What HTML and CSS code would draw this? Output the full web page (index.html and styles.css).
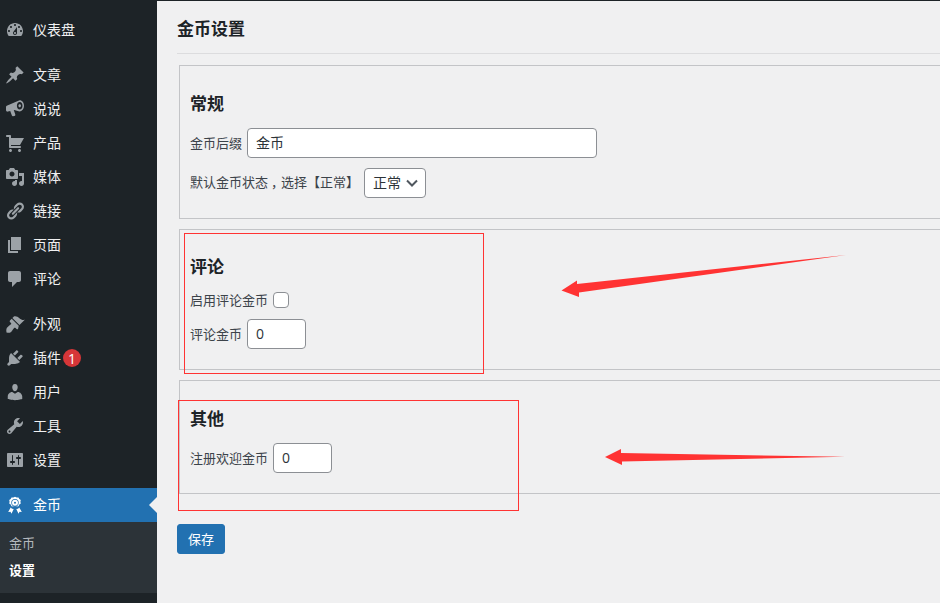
FILE: index.html
```html
<!DOCTYPE html>
<html lang="zh-CN">
<head>
<meta charset="utf-8">
<title>金币设置</title>
<link rel="stylesheet" href="styles.css">
</head>
<body>
<div class="app">
  <nav class="sidebar">
    <ul class="menu">
      <li class="item"><svg class="icon" viewBox="0 0 20 20"><path fill-rule="evenodd" d="M3.76 16h12.48c1.1-1.37 1.76-3.11 1.76-5 0-4.42-3.58-8-8-8s-8 3.58-8 8c0 1.89.66 3.63 1.76 5zM10 4c.55 0 1 .45 1 1s-.45 1-1 1-1-.45-1-1 .45-1 1-1zM6 6c.55 0 1 .45 1 1s-.45 1-1 1-1-.45-1-1 .45-1 1-1zm8 0c.55 0 1 .45 1 1s-.45 1-1 1-1-.45-1-1 .45-1 1-1zm-5.37 5.55L12 7v6c0 1.1-.9 2-2 2s-2-.9-2-2c0-.57.24-1.08.63-1.45zM4 10c.55 0 1 .45 1 1s-.45 1-1 1-1-.45-1-1 .45-1 1-1zm12 0c.55 0 1 .45 1 1s-.45 1-1 1-1-.45-1-1 .45-1 1-1zm-5 3c0-.55-.45-1-1-1s-1 .45-1 1 .45 1 1 1 1-.45 1-1z"/></svg><span>仪表盘</span></li>
    </ul>
    <ul class="menu">
      <li class="item"><svg class="icon" viewBox="0 0 20 20"><path d="M10.44 3.02l1.82-1.82 6.36 6.35-1.83 1.82c-1.05-.68-2.48-.57-3.41.36l-.75.75c-.92.93-1.04 2.35-.35 3.41l-1.83 1.82-2.41-2.41-2.8 2.79c-.42.42-3.38 2.71-3.8 2.29s1.86-3.39 2.28-3.81l2.79-2.79L4.1 9.36l1.83-1.82c1.05.69 2.48.57 3.4-.36l.75-.75c.93-.92 1.05-2.35.36-3.41z"/></svg><span>文章</span></li>
      <li class="item"><svg class="icon" viewBox="0 0 20 20"><path fill-rule="evenodd" d="M14.6 1.2c2.8 0 4.4 2.6 4.4 5.6s-1.9 5.6-4.5 5.6l-5.3-1.5-.4.2 1.5 4.4c.2.7-.2 1.4-.9 1.5l-1.4.2c-.5.1-.9-.2-1.1-.7L5.2 12l-2.3.6C1.900 12.800 1 12 1 11V8.200c0-.8.6-1.400 1.300-1.600zM14.700 3c-1.600 0-2.800 1.700-2.800 3.800s1.200 3.800 2.800 3.800 2.800-1.700 2.800-3.800S16.300 3 14.700 3zm0 2.300c.8 0 1.300.7 1.300 1.500s-.6 1.500-1.300 1.500-1.300-.7-1.300-1.500.5-1.500 1.300-1.500z"/></svg><span>说说</span></li>
      <li class="item"><svg class="icon" viewBox="0 0 20 20"><path d="M6 13h9c.55 0 1 .45 1 1s-.45 1-1 1H5c-.55 0-1-.45-1-1V4H2c-.55 0-1-.45-1-1s.45-1 1-1h3c.55 0 1 .45 1 1v2h13l-4 7H6v1zm-.5 3c.83 0 1.5.67 1.500 1.500S6.330 19 5.500 19 4 18.330 4 17.500 4.670 16 5.500 16zm9 0c.83 0 1.500.67 1.500 1.500s-.67 1.500-1.500 1.500-1.500-.67-1.500-1.500.67-1.500 1.500-1.500z"/></svg><span>产品</span></li>
      <li class="item"><svg class="icon" viewBox="0 0 20 20"><path fill-rule="evenodd" d="M13 11V4c0-.55-.45-1-1-1h-1.670L9 1H5L3.670 3H2c-.55 0-1 .45-1 1v7c0 .55.45 1 1 1h10c.55 0 1-.45 1-1zM7 4.500c1.380 0 2.500 1.120 2.500 2.500S8.380 9.500 7 9.500 4.500 8.380 4.500 7 5.620 4.500 7 4.500zM14 6h5v10.500c0 1.380-1.120 2.500-2.500 2.500S14 17.880 14 16.500s1.120-2.500 2.500-2.500c.17 0 .34.02.5.05V9h-3V6zm-4 8.050V13h2v3.500c0 1.380-1.120 2.500-2.500 2.500S7 17.880 7 16.500 8.120 14 9.500 14c.17 0 .34.02.5.05z"/></svg><span>媒体</span></li>
      <li class="item"><svg class="icon" viewBox="0 0 20 20"><path d="M17.740 2.760c1.680 1.690 1.680 4.410 0 6.100l-1.530 1.520c-1.120 1.120-2.700 1.470-4.140 1.090l2.620-2.610.76-.77.76-.76c.84-.84.84-2.200 0-3.040-.84-.85-2.200-.85-3.040 0l-.77.76-3.380 3.380c-.37-1.440-.02-3.020 1.100-4.140l1.520-1.530c1.690-1.680 4.420-1.680 6.100 0zM8.590 13.430l5.340-5.340c.42-.42.42-1.100 0-1.520-.44-.43-1.130-.39-1.530 0l-5.330 5.340c-.42.42-.42 1.100 0 1.520.44.43 1.130.39 1.520 0zm-.76 2.290l4.140-4.150c.38 1.440.03 3.020-1.090 4.140l-1.520 1.530c-1.690 1.680-4.410 1.680-6.100 0-1.680-1.680-1.680-4.420 0-6.100l1.530-1.520c1.120-1.120 2.700-1.470 4.140-1.100l-4.140 4.150c-.85.84-.85 2.200 0 3.050.84.84 2.200.84 3.040 0z"/></svg><span>链接</span></li>
      <li class="item"><svg class="icon" viewBox="0 0 20 20"><path d="M6 15V2h10v13H6zm-1 1h8v2H3V5h2v11z"/></svg><span>页面</span></li>
      <li class="item"><svg class="icon" viewBox="0 0 20 20"><path d="M5 2h9c1.100 0 2 .9 2 2v7c0 1.100-.9 2-2 2h-2l-5 5v-5H5c-1.100 0-2-.9-2-2V4c0-1.100.9-2 2-2z"/></svg><span>评论</span></li>
    </ul>
    <ul class="menu">
      <li class="item"><svg class="icon" viewBox="0 0 20 20"><path d="M14.480 11.060L7.410 3.990l1.500-1.500c.5-.56 2.300-.47 3.510.32 1.210.8 1.430 1.280 2.910 2.100 1.180.64 2.450 1.260 4.450.85zm-.71.71L6.700 4.700 4.930 6.470c-.39.39-.39 1.020 0 1.410l1.060 1.060c.39.39.39 1.030 0 1.420-.6.6-1.430 1.110-2.210 1.690-.35.26-.7.53-1.010.84C1.430 13.710 1 15.500 1.500 18.500c3 .5 4.790.07 5.090-1.270.31-.31.58-.66.84-1.010.58-.78 1.090-1.610 1.690-2.210.39-.39 1.030-.39 1.420 0l1.060 1.060c.39.39 1.020.39 1.410 0z"/></svg><span>外观</span></li>
      <li class="item"><svg class="icon" viewBox="0 0 20 20"><path d="M13.110 4.360L9.870 7.600 8 5.730l3.240-3.240c.35-.34 1.050-.2 1.560.32.52.51.66 1.210.31 1.550zm-8 1.770l.91-1.120 9.010 9.010-1.190.84c-.71.71-2.630 1.160-3.820 1.160H6.140L4.900 17.260c-.59.59-1.540.59-2.120 0-.59-.58-.59-1.530 0-2.120l1.240-1.240v-3.880c0-1.130.4-3.190 1.090-3.890zm7.260 3.970l3.240-3.240c.34-.35 1.040-.21 1.550.31.52.51.66 1.210.31 1.550l-3.240 3.250z"/></svg><span>插件</span><b class="badge">1</b></li>
      <li class="item"><svg class="icon" viewBox="0 0 20 20"><path d="M10 9.250c-2.270 0-2.730-3.440-2.730-3.440C7 4.020 7.820 2 9.970 2c2.160 0 2.980 2.020 2.710 3.810 0 0-.41 3.440-2.680 3.440zm0 2.570L12.720 10c2.390 0 4.520 2.330 4.520 4.530v2.490s-3.650 1.130-7.240 1.130c-3.650 0-7.240-1.130-7.240-1.130v-2.490c0-2.250 1.940-4.480 4.470-4.480z"/></svg><span>用户</span></li>
      <li class="item"><svg class="icon" viewBox="0 0 20 20"><path fill-rule="evenodd" d="M16.680 9.770c-1.340 1.340-3.300 1.670-4.950.99l-5.410 6.520c-.99.99-2.590.99-3.580 0s-.99-2.590 0-3.570l6.520-5.420c-.68-1.650-.35-3.610.99-4.950 1.280-1.280 3.120-1.620 4.720-1.060l-2.890 2.890 2.820 2.820 2.860-2.870c.53 1.580.18 3.390-1.080 4.650zM3.810 16.210c.4.39 1.040.39 1.430 0 .4-.4.4-1.040 0-1.430-.39-.4-1.030-.4-1.430 0-.39.39-.39 1.030 0 1.430z"/></svg><span>工具</span></li>
      <li class="item"><svg class="icon" viewBox="0 0 20 20"><path fill-rule="evenodd" d="M18 16V4c0-.55-.45-1-1-1H3c-.55 0-1 .45-1 1v12c0 .55.45 1 1 1h14c.55 0 1-.45 1-1zM8 11h1c.55 0 1 .45 1 1s-.45 1-1 1H8v1.500c0 .28-.22.5-.5.5s-.5-.22-.5-.5V13H6c-.55 0-1-.45-1-1s.45-1 1-1h1V5.500c0-.28.22-.5.5-.5s.5.22.5.5V11zm5-2h-1c-.55 0-1-.45-1-1s.45-1 1-1h1V5.500c0-.28.22-.5.5-.5s.5.22.5.5V7h1c.55 0 1 .45 1 1s-.45 1-1 1h-1v5.500c0 .28-.22.5-.5.5s-.5-.22-.5-.5V9z"/></svg><span>设置</span></li>
    </ul>
    <ul class="menu">
      <li class="item active"><svg class="icon" viewBox="0 0 20 20"><path fill-rule="evenodd" d="M10 1.800l1.700.7 1.800-.1.8 1.600 1.500 1-.4 1.800.4 1.800-1.500 1-.8 1.600-1.800-.1-1.700.7-1.700-.7-1.800.1-.8-1.600-1.500-1 .4-1.800-.4-1.800 1.500-1 .8-1.600 1.800.1zM10 4.100a3.700 3.700 0 1 0 0 7.400 3.700 3.700 0 1 0 0-7.400zM10 4.800a3 3 0 1 1 0 6 3 3 0 1 1 0-6zM10 6.800a1 1 0 1 0 0 2 1 1 0 1 0 0-2z"/><path d="M5.700 12.400l1.300 1.300 1.700.3-2.200 4.800-1-2-2.300.3zM14.300 12.400l-1.300 1.300-1.700.3 2.200 4.800 1-2 2.300.3z"/></svg><span>金币</span></li>
      <li class="submenu">
        <a class="sublink">金币</a>
        <a class="sublink current">设置</a>
      </li>
    </ul>
  </nav>
  <main class="content">
    <h1 class="title">金币设置</h1>
    <form class="settings">
      <section class="panel">
        <h2 class="panel-title">常规</h2>
        <div class="field">
          <label>金币后缀</label>
          <input class="input wide" type="text" value="金币">
        </div>
        <div class="field">
          <label class="label-up">默认金币状态<span class="comma">，</span>选择【正常】</label>
          <div class="select"><span>正常</span><svg class="chevron" viewBox="0 0 12 8"><path d="M1 1.500l5 5 5-5"/></svg></div>
        </div>
      </section>
      <section class="panel panel-tight">
        <h2 class="panel-title">评论</h2>
        <div class="field check-row">
          <label>启用评论金币</label>
          <input class="check" type="checkbox">
        </div>
        <div class="field">
          <label>评论金币</label>
          <input class="input number" type="text" value="0">
        </div>
      </section>
      <section class="panel">
        <h2 class="panel-title">其他</h2>
        <div class="field">
          <label>注册欢迎金币</label>
          <input class="input number" type="text" value="0">
        </div>
      </section>
      <button class="save" type="button">保存</button>
    </form>
  </main>
</div>
<svg class="annotations" viewBox="0 0 940 603">
  <rect class="mark" x="184.500" y="233.500" width="299" height="140"/>
  <rect class="mark" x="178.500" y="400.500" width="340" height="110"/>
  <polygon class="arrow" points="561.500,290.500 577,280.500 577,284 846,255 579,292.500 579,297"/>
  <polygon class="arrow" points="605,457 621,449 621,453 845,456.800 622,461.500 622,465"/>
</svg>
</body>
</html>
```
FILE: styles.css
```css
* { box-sizing: border-box; }
html, body { margin: 0; height: 100%; }
body {
  overflow: hidden;
  background: #f0f0f1;
  color: #3c434a;
  font-family: "Open Sans", "Noto Sans CJK SC", sans-serif;
  font-size: 13px;
}
.app { display: flex; height: 603px; border-top: 1px solid #1d2327; }
.sidebar {
  flex: 0 0 157px;
  background: #1d2327;
  padding-top: 12px;
  color: #fff;
}
.menu { list-style: none; margin: 0 0 11px; padding: 0; }
.item {
  position: relative;
  display: flex;
  align-items: center;
  height: 34px;
  padding-left: 5px;
  gap: 8px;
  font-size: 14px;
  color: #f0f0f1;
}
.item span { margin-bottom: 2px; }
.icon { width: 20px; height: 20px; fill: #9ca2a7; flex: none; }
.badge {
  display: flex;
  align-items: center;
  justify-content: center;
  width: 18px;
  height: 18px;
  margin-left: -6px;
  border-radius: 50%;
  background: #d63638;
  color: #fff;
  font-size: 14px;
  font-weight: 400;
}
.active { background: #2271b1; color: #fff; }
.active .icon { fill: #fff; }
.active::after {
  content: "";
  position: absolute;
  right: 0;
  top: 9px;
  border: 8px solid transparent;
  border-right-color: #f0f0f1;
  border-left-width: 0;
}
.submenu {
  display: flex;
  flex-direction: column;
  height: 71px;
  padding: 7px 0 0 9px;
  background: #2c3338;
}
.sublink { height: 28px; line-height: 28px; color: #b4b9be; font-size: 13px; }
.current { color: #fff; font-weight: 700; margin-top: -1px; }
.content { flex: 1; min-width: 0; padding-left: 20px; overflow: hidden; }
.title {
  margin: 0;
  padding-top: 16px;
  font-size: 17px;
  font-weight: 600;
  line-height: 24px;
  color: #1d2327;
  border-bottom: 1px solid #dcdcde;
  box-sizing: content-box;
  height: 36px;
}
.settings { padding-top: 11px; }
.panel {
  margin: 0 -20px 10px 2px;
  padding: 26px 10px 20px;
  border: 1px solid #c3c4c7;
}
.panel-tight { padding-top: 25px; }
.panel-tight .panel-title { margin-bottom: 13px; }
.panel-title {
  margin: 0 0 12px;
  font-size: 17px;
  font-weight: 600;
  line-height: 24px;
  color: #1d2327;
}
.field { display: flex; align-items: center; gap: 5px; margin-bottom: 10px; }
.field:last-child { margin-bottom: 0; }
.field label { margin-bottom: 2px; }
.field .label-up { margin-bottom: 4px; }
.comma { padding-left: 3px; letter-spacing: -3px; }
.check-row { align-items: flex-start; height: 17px; }
.check-row label { line-height: 16px; margin-bottom: 0; }
.input {
  height: 30px;
  padding: 0 8px 2px;
  border: 1px solid #8c8f94;
  border-radius: 4px;
  background: #fff;
  color: #2c3338;
  font: inherit;
  font-size: 14px;
}
.wide { width: 350px; }
.number { width: 59px; }
.select {
  display: flex;
  align-items: center;
  justify-content: space-between;
  width: 62px;
  height: 30px;
  padding: 0 7px 0 8px;
  border: 1px solid #8c8f94;
  border-radius: 4px;
  background: #fff;
  color: #2c3338;
  font-size: 14px;
}
.select span { margin-bottom: 2px; }
.chevron { width: 12px; height: 8px; fill: none; stroke: #50575e; stroke-width: 2; }
.check {
  appearance: none;
  width: 16px;
  height: 16px;
  margin: 0;
  border: 1px solid #8c8f94;
  border-radius: 4px;
  background: #fff;
}
.save {
  display: block;
  width: 48px;
  height: 30px;
  margin-top: 30px;
  padding: 0 0 2px;
  border: 1px solid #2271b1;
  border-radius: 3px;
  background: #2271b1;
  color: #fff;
  font: inherit;
}
.annotations { position: absolute; left: 0; top: 0; width: 940px; height: 603px; pointer-events: none; }
.mark { fill: none; stroke: #f33; stroke-width: 1; }
.arrow { fill: #f33; }
```
